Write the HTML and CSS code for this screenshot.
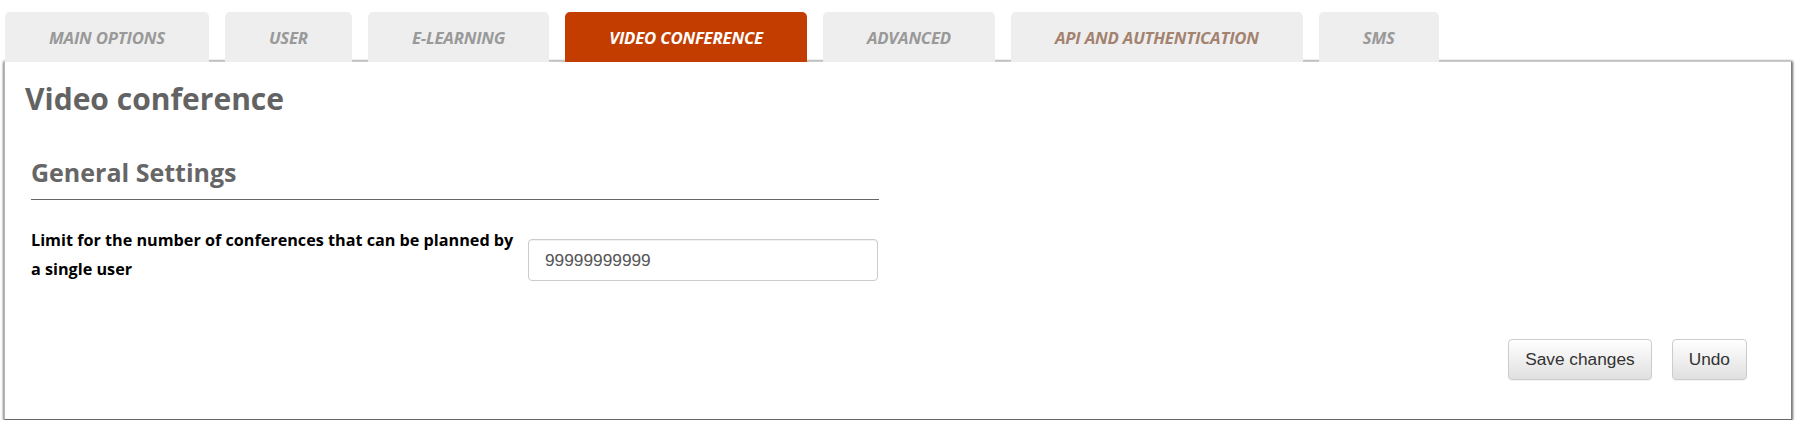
FILE: index.html
```html
<!DOCTYPE html>
<html lang="en">
<head>
<meta charset="utf-8">
<title>Video conference settings</title>
<link rel="stylesheet" href="styles.css">
</head>
<body>
<div class="page">
  <ul class="tabs">
    <li class="tab">MAIN OPTIONS</li>
    <li class="tab">USER</li>
    <li class="tab">E-LEARNING</li>
    <li class="tab active">VIDEO CONFERENCE</li>
    <li class="tab">ADVANCED</li>
    <li class="tab tab-brown">API AND AUTHENTICATION</li>
    <li class="tab">SMS</li>
  </ul>
  <div class="panel">
    <h1 class="title">Video conference</h1>
    <div class="section">
      <h3 class="section-title">General Settings</h3>
      <div class="form-row">
        <label class="label" for="limit">Limit for the number of conferences that can be planned by a single user</label>
        <input class="input" id="limit" type="text" value="99999999999">
      </div>
    </div>
    <div class="actions">
      <button class="btn" type="button">Save changes</button>
      <button class="btn" type="button">Undo</button>
    </div>
  </div>
</div>
</body>
</html>
```
FILE: styles.css
```css
html, body {
  margin: 0;
  padding: 0;
  background: #fff;
}

.page {
  padding: 12px 10px 0 4px;
}

.tabs {
  list-style: none;
  margin: 0 0 -1px 1px;
  padding: 0;
  display: flex;
  gap: 16px;
  position: relative;
  z-index: 1;
}

.tab {
  height: 50px;
  padding: 0 44px;
  display: flex;
  align-items: center;
  justify-content: center;
  background: #eeeeee;
  border-radius: 5px 5px 0 0;
  font-family: "Open Sans", "DejaVu Sans", sans-serif;
  font-weight: 700;
  font-style: italic;
  font-size: 16.8px;
  letter-spacing: -0.2px;
  color: #999999;
  white-space: nowrap;
}

.tab-brown {
  color: #a3826f;
}

.tab.active {
  background: #c43d00;
  color: #ffffff;
}

.panel {
  background: #fff;
  border-top: 1px solid #cccccc;
  border-left: 1px solid #b5b5b5;
  border-right: 1px solid #808080;
  border-bottom: 1px solid #666666;
  box-shadow: 0 1px 3px rgba(0, 0, 0, 0.55), 1px 0 2px rgba(0, 0, 0, 0.35), -1px 0 2px rgba(0, 0, 0, 0.2);
  padding: 19px 44px 39px 20px;
}

.title {
  margin: 0;
  font-family: "Open Sans", "DejaVu Sans", sans-serif;
  font-weight: 700;
  font-size: 30px;
  line-height: 36px;
  color: #636363;
}

.section {
  margin: 40px 0 0 6px;
  width: 848px;
}

.section-title {
  margin: 0;
  padding-bottom: 12px;
  border-bottom: 1px solid #666666;
  font-family: "Open Sans", "DejaVu Sans", sans-serif;
  font-weight: 700;
  font-size: 25px;
  line-height: 30px;
  color: #666666;
}

.form-row {
  display: grid;
  grid-template-columns: 490px 350px;
  column-gap: 7px;
  align-items: start;
  margin-top: 26px;
}

.label {
  font-family: "Open Sans", "DejaVu Sans", sans-serif;
  font-weight: 700;
  font-size: 16.2px;
  line-height: 29px;
  color: #000;
}

.input {
  box-sizing: border-box;
  margin-top: 13px;
  width: 350px;
  height: 42px;
  padding: 0 16px;
  border: 1px solid #cccccc;
  border-radius: 4px;
  box-shadow: inset 0 1px 1px rgba(0, 0, 0, 0.06);
  font-family: "Liberation Sans", Arial, sans-serif;
  font-size: 17.3px;
  color: #555555;
  outline: none;
}

.actions {
  display: flex;
  justify-content: flex-end;
  gap: 20px;
  margin-top: 55px;
}

.btn {
  box-sizing: border-box;
  height: 41px;
  padding: 0 16px;
  border: 1px solid #cccccc;
  border-radius: 4px;
  background: linear-gradient(to bottom, #ffffff 0%, #e0e0e0 100%);
  box-shadow: inset 0 1px 0 rgba(255, 255, 255, 0.15), 0 1px 1px rgba(0, 0, 0, 0.05);
  font-family: "Liberation Sans", Arial, sans-serif;
  font-size: 17.3px;
  color: #333333;
  cursor: pointer;
}
```
